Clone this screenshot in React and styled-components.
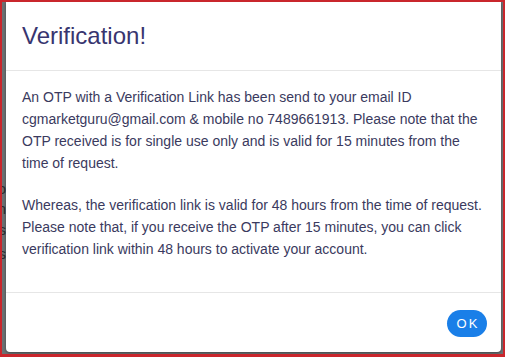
import styled, { createGlobalStyle } from "styled-components";

const Global = createGlobalStyle`
    html, body {
        margin: 0;
        padding: 0;
        background: #ffffff;
    }
    * {
        box-sizing: border-box;
    }
`

const Frame = styled.div`
    width: 505px;
    height: 357px;
    border: 2px solid #c9262c;
    border-bottom-width: 3px;
    background: #6b7173;
    display: flex;
    padding: 0 2px 2px 0;
    font-family: "Liberation Sans", Arial, sans-serif;
    overflow: hidden;
`

const PageBehind = styled.div`
    width: 4px;
    flex: none;
    overflow: hidden;
    display: flex;
    flex-direction: column;
    align-items: flex-end;
    padding-top: 177px;
    color: #2a2e30;
    font-size: 15px;
`

const Letter = styled.span`
    line-height: ${p => p.$h}px;
`

const Modal = styled.div`
    flex: 1;
    background: #ffffff;
    border-radius: 0 0 4px 4px;
    box-shadow: 0 1px 3px rgba(0, 0, 0, 0.4);
    display: flex;
    flex-direction: column;
`

const Header = styled.div`
    height: 69px;
    display: flex;
    align-items: center;
    padding: 0 16px;
    border-bottom: 1px solid #e6e6e6;
`

const Title = styled.h4`
    margin: 0;
    font-size: 24px;
    font-weight: 400;
    color: #38356f;
    padding-bottom: 1px;
`

const Body = styled.div`
    flex: 1;
    padding: 15px 16px 0 16px;
    border-bottom: 1px solid #e6e6e6;
`

const Para = styled.p`
    margin: 0 0 ${p => p.$gap}px 0;
    font-size: 14px;
    line-height: 22px;
    color: #3a3a5e;
`

const Footer = styled.div`
    height: 59px;
    display: flex;
    align-items: center;
    justify-content: flex-end;
    padding: 0 14px 0 16px;
`

const OkButton = styled.button`
    border: none;
    background: #1a7fe8;
    color: #ffffff;
    font-family: "Liberation Sans", Arial, sans-serif;
    font-size: 13px;
    letter-spacing: 2px;
    height: 27px;
    width: 40px;
    padding: 0 0 0 2px;
    border-radius: 14px;
    margin-top: 2px;
`

export default function App() {
    return (
        <>
            <Global />
            <Frame>
                <PageBehind>
                    <Letter $h={20}>o</Letter>
                    <Letter $h={20}>h</Letter>
                    <Letter $h={22}>s</Letter>
                    <Letter $h={26}>s</Letter>
                </PageBehind>
                <Modal>
                    <Header>
                        <Title>Verification!</Title>
                    </Header>
                    <Body>
                        <Para $gap={20}>
                            An OTP with a Verification Link has been send to your email ID
                            cgmarketguru@gmail.com &amp; mobile no 7489661913. Please note that the
                            OTP received is for single use only and is valid for 15 minutes from the
                            time of request.
                        </Para>
                        <Para $gap={0}>
                            Whereas, the verification link is valid for 48 hours from the time of request.
                            Please note that, if you receive the OTP after 15 minutes, you can click
                            verification link within 48 hours to activate your account.
                        </Para>
                    </Body>
                    <Footer>
                        <OkButton>OK</OkButton>
                    </Footer>
                </Modal>
            </Frame>
        </>
    );
}
